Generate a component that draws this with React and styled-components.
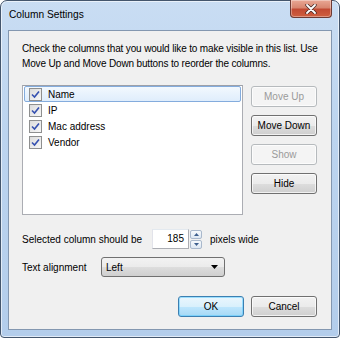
import React from 'react'
import styled, {createGlobalStyle} from 'styled-components'

const Global = createGlobalStyle`
    body {
        margin: 0;
        background: #ffffff;
        font-family: "Liberation Sans", Arial, sans-serif;
        font-size: 10px;
        color: #000;
    }
`

const Window = styled.div`
    width: 340px;
    height: 338px;
    box-sizing: border-box;
    border: 1px solid #44566d;
    border-radius: 7px 7px 4px 4px;
    background: linear-gradient(180deg, #c9ddf3 0%, #bcd4ef 40%, #b3cdeb 100%);
    padding: 0 7px 7px 7px;
    display: flex;
    flex-direction: column;
    box-shadow: inset 0 0 0 1px rgba(255,255,255,0.6);
`

const TitleBar = styled.div`
    height: 29px;
    display: flex;
    align-items: center;
    justify-content: space-between;
    font-size: 10.2px;
    font-family: "Liberation Sans", Arial, sans-serif;
    color: #000;
    padding-left: 1px;
    padding-bottom: 2px;
    box-sizing: border-box;
`

const CloseButton = styled.div`
    align-self: flex-start;
    width: 42px;
    height: 18px;
    margin-top: -1px;
    box-sizing: border-box;
    border: 1px solid #6d3a33;
    border-top: none;
    border-radius: 0 0 4px 4px;
    background: linear-gradient(180deg, #e9a895 0%, #d88670 45%, #c24a33 55%, #cf5f3f 100%);
    display: flex;
    align-items: center;
    justify-content: center;
    box-shadow: inset 0 0 0 1px rgba(255,255,255,0.35);
`

const Client = styled.div`
    flex: 1;
    border: 1px solid #8397b0;
    background: #f0f0f0;
    padding: 10px 14px 12px 13px;
    display: flex;
    flex-direction: column;
`

const Intro = styled.p`
    margin: 0;
    line-height: 15px;
    width: 302px;
    letter-spacing: -0.15px;
`

const Middle = styled.div`
    margin-top: 14px;
    display: flex;
    gap: 8px;
`

const ListBox = styled.div`
    width: 221px;
    height: 130px;
    box-sizing: border-box;
    border: 1px solid #abadb3;
    border-top-color: #9da0a8;
    background: #fff;
    padding: 0 1px;
`

const Row = styled.div`
    height: 16px;
    box-sizing: border-box;
    display: flex;
    align-items: center;
    padding-left: 4px;
    gap: 6px;
    border: 1px solid ${p => p.selected ? '#84acdd' : 'transparent'};
    border-radius: 2px;
    background: ${p => p.selected ? 'linear-gradient(180deg, #f2f8fe 0%, #dfedfc 100%)' : 'transparent'};
`

const Box = styled.span`
    width: 13px;
    height: 13px;
    box-sizing: border-box;
    border: 1px solid #8e8f8f;
    background: linear-gradient(135deg, #dcdcdc 0%, #f7f7f7 100%);
    display: flex;
    align-items: center;
    justify-content: center;
`

const Side = styled.div`
    display: flex;
    flex-direction: column;
    gap: 8px;
    padding-top: 1px;
`

const Button = styled.button`
    width: ${p => p.w || 66}px;
    height: 21px;
    box-sizing: border-box;
    padding: 0;
    font-family: "Liberation Sans", Arial, sans-serif;
    font-size: 10px;
    border-radius: 3px;
    border: 1px solid ${p => p.disabled ? '#b6babd' : p.primary ? '#3c7fb1' : '#707070'};
    color: ${p => p.disabled ? '#9a9a9a' : '#000'};
    background: ${p => p.disabled
        ? '#f4f4f4'
        : p.primary
            ? 'linear-gradient(180deg, #eaf6fd 0%, #d9f0fc 50%, #bee6fd 51%, #a7d9f5 100%)'
            : 'linear-gradient(180deg, #f2f2f2 0%, #ebebeb 50%, #dddddd 51%, #cfcfcf 100%)'};
    box-shadow: inset 0 0 0 1px ${p => p.primary ? 'rgba(80,200,255,0.5)' : 'rgba(255,255,255,0.7)'};
`

const FieldRow = styled.div`
    display: flex;
    align-items: center;
    margin-top: ${p => p.top}px;
`

const Label = styled.span`
    width: ${p => p.w}px;
`

const NumberBox = styled.div`
    width: 37px;
    height: 20px;
    box-sizing: border-box;
    border: 1px solid #abadb3;
    border-top-color: #e3e9ef;
    border-left-color: #e2e3ea;
    background: #fff;
    text-align: right;
    padding-right: 4px;
    line-height: 17px;
`

const Spinner = styled.div`
    display: flex;
    flex-direction: column;
    gap: 1px;
    margin: 0 8px 0 1px;
`

const SpinBtn = styled.div`
    width: 12px;
    height: 9px;
    box-sizing: border-box;
    border: 1px solid #a9b8cc;
    border-radius: 2px;
    background: linear-gradient(180deg, #f7fafd 0%, #dde7f2 100%);
    display: flex;
    align-items: center;
    justify-content: center;
`

const Combo = styled.div`
    width: 124px;
    height: 20px;
    box-sizing: border-box;
    border: 1px solid #707070;
    border-radius: 3px;
    background: linear-gradient(180deg, #f2f2f2 0%, #ebebeb 50%, #dddddd 51%, #cfcfcf 100%);
    display: flex;
    align-items: center;
    justify-content: space-between;
    padding: 0 6px 0 4px;
`

const Footer = styled.div`
    margin-top: auto;
    display: flex;
    justify-content: flex-end;
    gap: 7px;
`

const Check = () => (
    <svg width="9" height="9" viewBox="0 0 9 9">
        <path d="M1 4.5 L3.5 7 L8 1.5" fill="none" stroke="#3550b0" strokeWidth="1.6" />
    </svg>
)

const columns = ['Name', 'IP', 'Mac address', 'Vendor']

export default function App() {
    return (
        <Window>
            <Global />
            <TitleBar>
                <span>Column Settings</span>
                <CloseButton>
                    <svg width="12" height="10" viewBox="0 0 12 10">
                        <path d="M2 1 L10 9 M10 1 L2 9" stroke="#4a2b27" strokeWidth="3.4" strokeLinecap="round" />
                        <path d="M2 1 L10 9 M10 1 L2 9" stroke="#ffffff" strokeWidth="1.8" strokeLinecap="round" />
                    </svg>
                </CloseButton>
            </TitleBar>
            <Client>
                <Intro>Check the columns that you would like to make visible in this list. Use Move Up and Move Down buttons to reorder the columns.</Intro>
                <Middle>
                    <ListBox>
                        {columns.map((c, i) => (
                            <Row key={c} selected={i === 0}>
                                <Box><Check /></Box>
                                <span>{c}</span>
                            </Row>
                        ))}
                    </ListBox>
                    <Side>
                        <Button disabled>Move Up</Button>
                        <Button>Move Down</Button>
                        <Button disabled>Show</Button>
                        <Button>Hide</Button>
                    </Side>
                </Middle>
                <FieldRow top={14}>
                    <Label w={130}>Selected column should be</Label>
                    <NumberBox>185</NumberBox>
                    <Spinner>
                        <SpinBtn>
                            <svg width="5" height="3" viewBox="0 0 5 3"><path d="M0 3 L2.5 0 L5 3 Z" fill="#3d5f8e" /></svg>
                        </SpinBtn>
                        <SpinBtn>
                            <svg width="5" height="3" viewBox="0 0 5 3"><path d="M0 0 L2.5 3 L5 0 Z" fill="#3d5f8e" /></svg>
                        </SpinBtn>
                    </Spinner>
                    <span>pixels wide</span>
                </FieldRow>
                <FieldRow top={8}>
                    <Label w={79}>Text alignment</Label>
                    <Combo>
                        <span>Left</span>
                        <svg width="7" height="4" viewBox="0 0 7 4"><path d="M0 0 L7 0 L3.5 4 Z" fill="#000" /></svg>
                    </Combo>
                </FieldRow>
                <Footer>
                    <Button primary>OK</Button>
                    <Button>Cancel</Button>
                </Footer>
            </Client>
        </Window>
    )
}
